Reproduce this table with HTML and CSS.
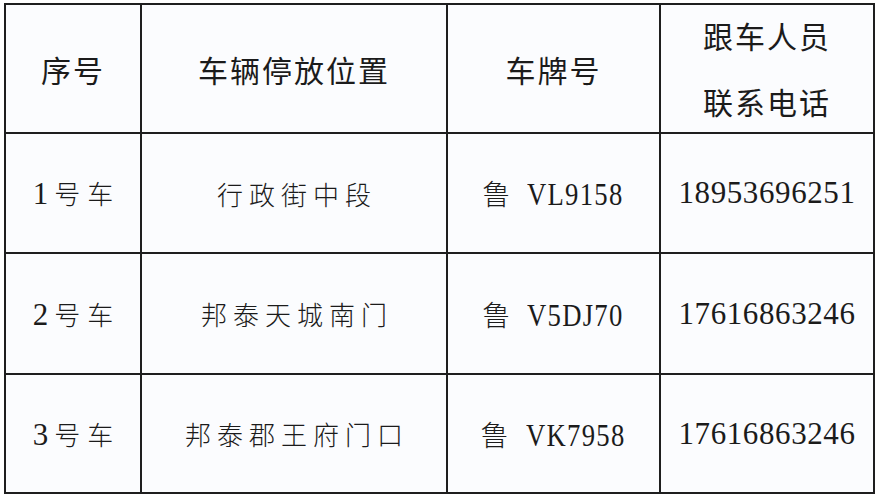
FILE: index.html
```html
<!DOCTYPE html>
<html lang="zh-CN">
<head>
<meta charset="utf-8">
<title>跟车人员联系电话</title>
<link rel="stylesheet" href="styles.css">
</head>
<body>
<table class="sheet">
  <colgroup>
    <col class="c1"><col class="c2"><col class="c3"><col class="c4">
  </colgroup>
  <thead>
    <tr class="head">
      <th>序号</th>
      <th>车辆停放位置</th>
      <th>车牌号</th>
      <th><span class="two">跟车人员<br>联系电话</span></th>
    </tr>
  </thead>
  <tbody>
    <tr class="r1">
      <td class="no"><span class="num idx">1</span>号车</td>
      <td class="place">行政街中段</td>
      <td class="plate"><span class="lu">鲁</span><span class="num code">VL9158</span></td>
      <td class="tel num">18953696251</td>
    </tr>
    <tr class="r2">
      <td class="no"><span class="num idx">2</span>号车</td>
      <td class="place">邦泰天城南门</td>
      <td class="plate"><span class="lu">鲁</span><span class="num code">V5DJ70</span></td>
      <td class="tel num">17616863246</td>
    </tr>
    <tr class="r3">
      <td class="no"><span class="num idx">3</span>号车</td>
      <td class="place">邦泰郡王府门口</td>
      <td class="plate"><span class="lu">鲁</span><span class="num code">VK7958</span></td>
      <td class="tel num">17616863246</td>
    </tr>
  </tbody>
</table>
</body>
</html>
```
FILE: styles.css
```css
html, body {
  margin: 0;
  padding: 0;
  background: #ffffff;
}
body {
  padding: 3px 0 0 4px;
  font-family: "Noto Sans CJK SC", "Noto Sans", sans-serif;
  color: #1b1b1b;
}
.sheet {
  border-collapse: collapse;
  table-layout: fixed;
  width: 871px;
  background: #fbfcfe;
}
.c1 { width: 136px; }
.c2 { width: 306px; }
.c3 { width: 213px; }
.c4 { width: 214px; }
.sheet th, .sheet td {
  border: 2px solid #1e1e1e;
  padding: 0;
  text-align: center;
  vertical-align: middle;
}
.head { height: 129px; }
.r1 { height: 120px; }
.r2 { height: 121px; }
.r3 { height: 119px; }
.sheet th {
  font-size: 30px;
  font-weight: 400;
  letter-spacing: 2px;
}
.two {
  display: inline-block;
  line-height: 66px;
  margin: -8px 0 -6px;
}
.sheet td {
  font-size: 26px;
  font-weight: 300;
}
.sheet .no {
  letter-spacing: 7px;
  padding-left: 7px;
}
.sheet .idx {
  margin-right: 6px;
}
.sheet .place {
  letter-spacing: 6px;
  padding-left: 6px;
}
.sheet .num {
  font-family: "Liberation Serif", serif;
  font-size: 31px;
  font-weight: 400;
  letter-spacing: 0;
}
.sheet .code {
  display: inline-block;
  letter-spacing: 1.5px;
  transform: scaleX(0.86);
  transform-origin: left center;
  margin-right: -15px;
  margin-left: 17px;
}
.sheet .tel {
  letter-spacing: 0.6px;
}
.lu {
  font-size: 28px;
}
```
